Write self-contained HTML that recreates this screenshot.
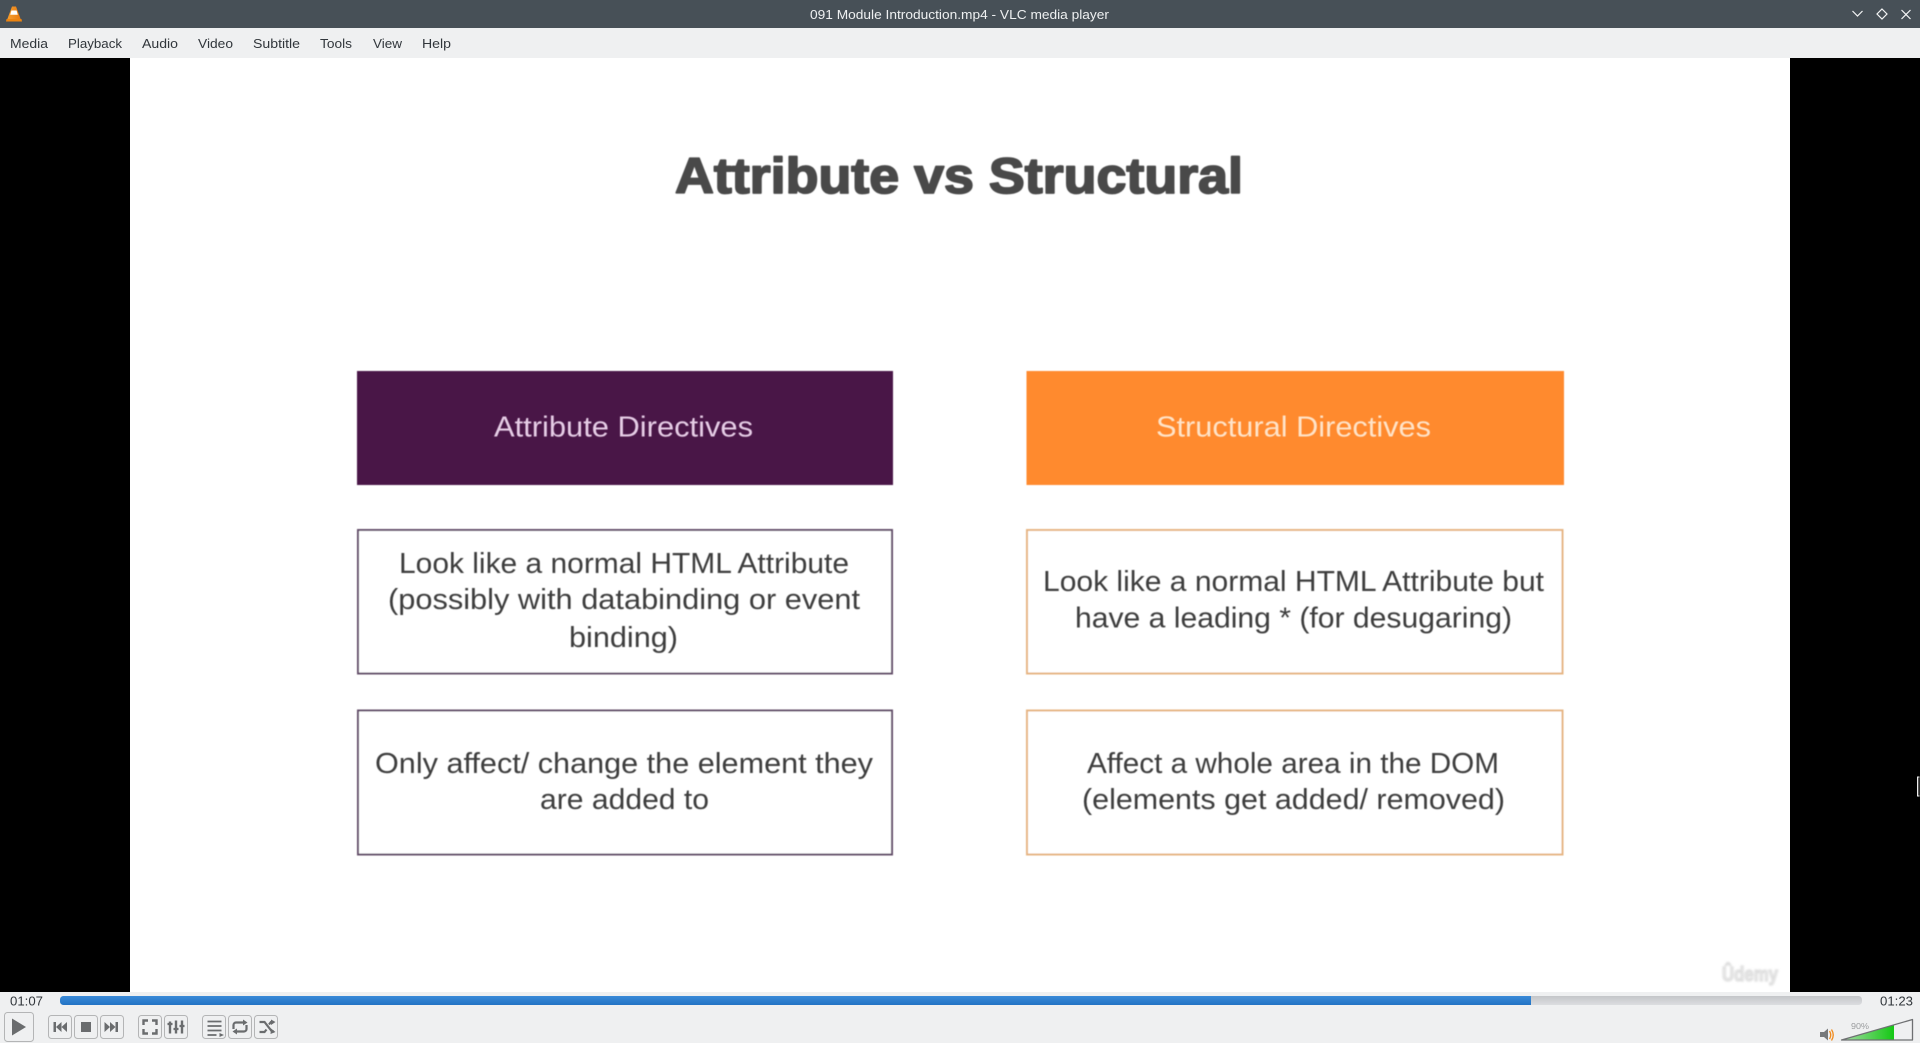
<!DOCTYPE html>
<html lang="en">
<head>
<meta charset="utf-8">
<title>091 Module Introduction.mp4 - VLC media player</title>
<style>
html,body{margin:0;padding:0;width:1920px;height:1043px;overflow:hidden;background:#eff0f1}
svg{position:absolute;left:0;top:0;display:block}
text{font-family:"Liberation Sans",sans-serif}
</style>
</head>
<body>
<svg width="1920" height="1043" viewBox="0 0 1920 1043" xmlns="http://www.w3.org/2000/svg">
<defs>
<filter id="b" x="-5%" y="-20%" width="110%" height="140%"><feGaussianBlur stdDeviation="0.5"/></filter>
<filter id="b1" x="-2%" y="-5%" width="104%" height="110%"><feGaussianBlur stdDeviation="0.4"/></filter>
<filter id="b2" x="-10%" y="-30%" width="120%" height="160%"><feGaussianBlur stdDeviation="1"/></filter>
<linearGradient id="blue" x1="0" y1="0" x2="0" y2="1"><stop offset="0" stop-color="#3a8ad8"/><stop offset="1" stop-color="#2273c4"/></linearGradient>
<linearGradient id="gray" x1="0" y1="0" x2="0" y2="1"><stop offset="0" stop-color="#c4c6c9"/><stop offset="1" stop-color="#dcdde0"/></linearGradient>
<linearGradient id="green" x1="0" y1="0" x2="1" y2="0"><stop offset="0" stop-color="#a8dca8"/><stop offset="1" stop-color="#14c814"/></linearGradient>
<linearGradient id="cone" x1="0" y1="0" x2="1" y2="0"><stop offset="0" stop-color="#f7a030"/><stop offset="1" stop-color="#e87a10"/></linearGradient>
</defs>

<!-- window -->
<rect width="1920" height="1043" fill="#eff0f1"/>
<rect width="1920" height="28" fill="#475057"/>
<rect y="58" width="1920" height="934" fill="#000"/>
<rect x="130" y="58" width="1660" height="934" fill="#fff"/>

<!-- vlc cone -->
<path d="M12 6.500h4l5 13.500H7z" fill="url(#cone)"/>
<path d="M11.400 10.500h5.200l1.200 4.200h-7.600z" fill="#fff"/>
<path d="M6.500 19h15l0.500 2.500h-16z" fill="#ec8410"/>

<!-- title -->
<text x="810" y="19" font-size="13" fill="#eef0f1" textLength="299" lengthAdjust="spacingAndGlyphs">091 Module Introduction.mp4 - VLC media player</text>
<path d="M1852.500 11l5 5 5-5" fill="none" stroke="#f4f5f5" stroke-width="1.200"/>
<path d="M1882 9l5 5-5 5-5-5z" fill="none" stroke="#f4f5f5" stroke-width="1.200"/>
<path d="M1901.500 10l9 9M1910.500 10l-9 9" fill="none" stroke="#f4f5f5" stroke-width="1.200"/>

<!-- menu -->
<g font-size="13" fill="#31363b">
<text x="10" y="48" textLength="38" lengthAdjust="spacingAndGlyphs">Media</text>
<text x="68" y="48" textLength="54" lengthAdjust="spacingAndGlyphs">Playback</text>
<text x="142" y="48" textLength="36" lengthAdjust="spacingAndGlyphs">Audio</text>
<text x="198" y="48" textLength="35" lengthAdjust="spacingAndGlyphs">Video</text>
<text x="253" y="48" textLength="47" lengthAdjust="spacingAndGlyphs">Subtitle</text>
<text x="320" y="48" textLength="32" lengthAdjust="spacingAndGlyphs">Tools</text>
<text x="373" y="48" textLength="29" lengthAdjust="spacingAndGlyphs">View</text>
<text x="422" y="48" textLength="29" lengthAdjust="spacingAndGlyphs">Help</text>
</g>

<!-- slide -->
<g filter="url(#b)">
<text x="675" y="193" font-size="50" font-weight="700" fill="#4a4a4a" stroke="#4a4a4a" stroke-width="1.800" stroke-linejoin="round" textLength="568" lengthAdjust="spacingAndGlyphs">Attribute vs Structural</text>
</g>
<g filter="url(#b1)">
<rect x="357" y="371" width="536" height="114" fill="#4a1446"/>
<rect x="1026.500" y="371" width="537.500" height="114" fill="#ff8a2e"/>
<g fill="#fff" stroke-width="2">
<rect x="358" y="530" width="534" height="143.500" stroke="#65506b"/>
<rect x="358" y="710.500" width="534" height="144" stroke="#65506b"/>
<rect x="1027" y="530" width="535.500" height="143.500" stroke="#e6b583"/>
<rect x="1027" y="710.500" width="535.500" height="144" stroke="#e6b583"/>
</g>
</g>
<g filter="url(#b)" font-size="29">
<text x="494" y="436.500" fill="#e6cde6" textLength="259" lengthAdjust="spacingAndGlyphs">Attribute Directives</text>
<text x="1156" y="436.500" fill="#ffe3c8" textLength="275" lengthAdjust="spacingAndGlyphs">Structural Directives</text>
<g fill="#3e3e3e">
<text x="399" y="573" textLength="450" lengthAdjust="spacingAndGlyphs">Look like a normal HTML Attribute</text>
<text x="388" y="609" textLength="472" lengthAdjust="spacingAndGlyphs">(possibly with databinding or event</text>
<text x="569" y="647" textLength="109" lengthAdjust="spacingAndGlyphs">binding)</text>
<text x="1043" y="591" textLength="501" lengthAdjust="spacingAndGlyphs">Look like a normal HTML Attribute but</text>
<text x="1075" y="627.500" textLength="437" lengthAdjust="spacingAndGlyphs">have a leading * (for desugaring)</text>
<text x="375" y="773" textLength="498" lengthAdjust="spacingAndGlyphs">Only affect/ change the element they</text>
<text x="540" y="809" textLength="169" lengthAdjust="spacingAndGlyphs">are added to</text>
<text x="1087" y="773" textLength="412" lengthAdjust="spacingAndGlyphs">Affect a whole area in the DOM</text>
<text x="1082" y="809" textLength="423" lengthAdjust="spacingAndGlyphs">(elements get added/ removed)</text>
</g>
</g>
<text x="1722" y="981" font-size="20" font-weight="700" fill="#e8e8e8" stroke="#d6d6d6" stroke-width="1" filter="url(#b2)" textLength="56" lengthAdjust="spacingAndGlyphs">Ûdemy</text>

<!-- edge cursor -->
<path d="M1919.500 777h-2v19h2" fill="#555" stroke="#eee" stroke-width="1"/>

<!-- seek -->
<text x="10" y="1005.500" font-size="13" fill="#31363b" textLength="33" lengthAdjust="spacingAndGlyphs">01:07</text>
<rect x="60" y="996" width="1802" height="9" rx="3.500" fill="url(#gray)"/>
<path d="M63.500 996H1531v9H63.500a3.500 3.500 0 0 1-3.500-3.500v-2a3.500 3.500 0 0 1 3.500-3.500z" fill="url(#blue)"/>
<text x="1880" y="1005.500" font-size="13" fill="#31363b" textLength="33" lengthAdjust="spacingAndGlyphs">01:23</text>

<!-- buttons -->
<g fill="#eff0f1" stroke="#b4b5b6" stroke-width="1">
<rect x="4.500" y="1012.500" width="29" height="29" rx="3"/>
<rect x="48.500" y="1015.500" width="23" height="23" rx="3"/>
<rect x="74.500" y="1015.500" width="23" height="23" rx="3"/>
<rect x="100.500" y="1015.500" width="23" height="23" rx="3"/>
<rect x="138.500" y="1015.500" width="23" height="23" rx="3"/>
<rect x="164.500" y="1015.500" width="23" height="23" rx="3"/>
<rect x="202.500" y="1015.500" width="23" height="23" rx="3"/>
<rect x="228.500" y="1015.500" width="23" height="23" rx="3"/>
<rect x="254.500" y="1015.500" width="23" height="23" rx="3"/>
</g>
<g fill="#6a6c6e">
<path d="M12 1018.500l14 8.500-14 8.500z"/>
<path d="M53.500 1022h2.500v10h-2.500zM56 1027l5.500-5v10zM61.500 1027l5.500-5v10z"/>
<rect x="81" y="1022" width="10" height="10"/>
<path d="M118 1022h-2.500v10h2.500zM115.500 1027l-5.500-5v10zM110 1027l-5.500-5v10z"/>
</g>
<g fill="none" stroke="#6a6c6e" stroke-width="2.400">
<path d="M143.500 1025v-4.500h4.500M152 1020.500h4.500v4.500M143.500 1029v4.500h4.500M152 1033.500h4.500v-4.500"/>
<path d="M170 1021.500v12M176 1020.500v13M182 1020.500v13"/>
<path d="M167.500 1024h5M173.500 1029h5M179.500 1026h5" stroke-width="2.200"/>
<path d="M207.500 1021.500h14M207.500 1026h14M207.500 1030.500h14M207.500 1035h9" stroke-width="1.800"/>
<path d="M233.500 1029v-4a2.500 2.500 0 0 1 2.500-2.500h9M246.500 1025v4a2.500 2.500 0 0 1-2.500 2.500h-9" stroke-width="2.200"/>
<path d="M259.500 1022l5 0 7.500 9.500h2M259.500 1032h5l2-2.500M269 1024.500l2-2.500h2.500" stroke-width="2.200"/>
</g>
<g fill="#6a6c6e">
<path d="M219.500 1033l4.500 2-4.500 2z"/>
<path d="M243 1019.500l4.500 3-4.500 3zM237 1028.500l-4.500 3 4.500 3z"/>
<path d="M271 1028.500l4.500 3.500-5 2zM271 1019.500l4.500 2.500-4.500 3z"/>
</g>

<!-- volume -->
<path d="M1820 1032h4l4-3.500v12l-4-3.500h-4z" fill="#77797b"/>
<path d="M1829.500 1031q2.500 4 0 8M1831.500 1029.500q3.500 5.500 0 11" fill="none" stroke="#f08a1c" stroke-width="1.300"/>
<text x="1851" y="1029" font-size="8.500" fill="#9a9c9e" textLength="18" lengthAdjust="spacingAndGlyphs">90%</text>
<path d="M1842 1040L1894 1025V1040z" fill="url(#green)"/>
<path d="M1841.500 1040l71-20.500v20.500z" fill="none" stroke="#6e7072" stroke-width="1.300" stroke-linejoin="round"/>
</svg>
</body>
</html>
